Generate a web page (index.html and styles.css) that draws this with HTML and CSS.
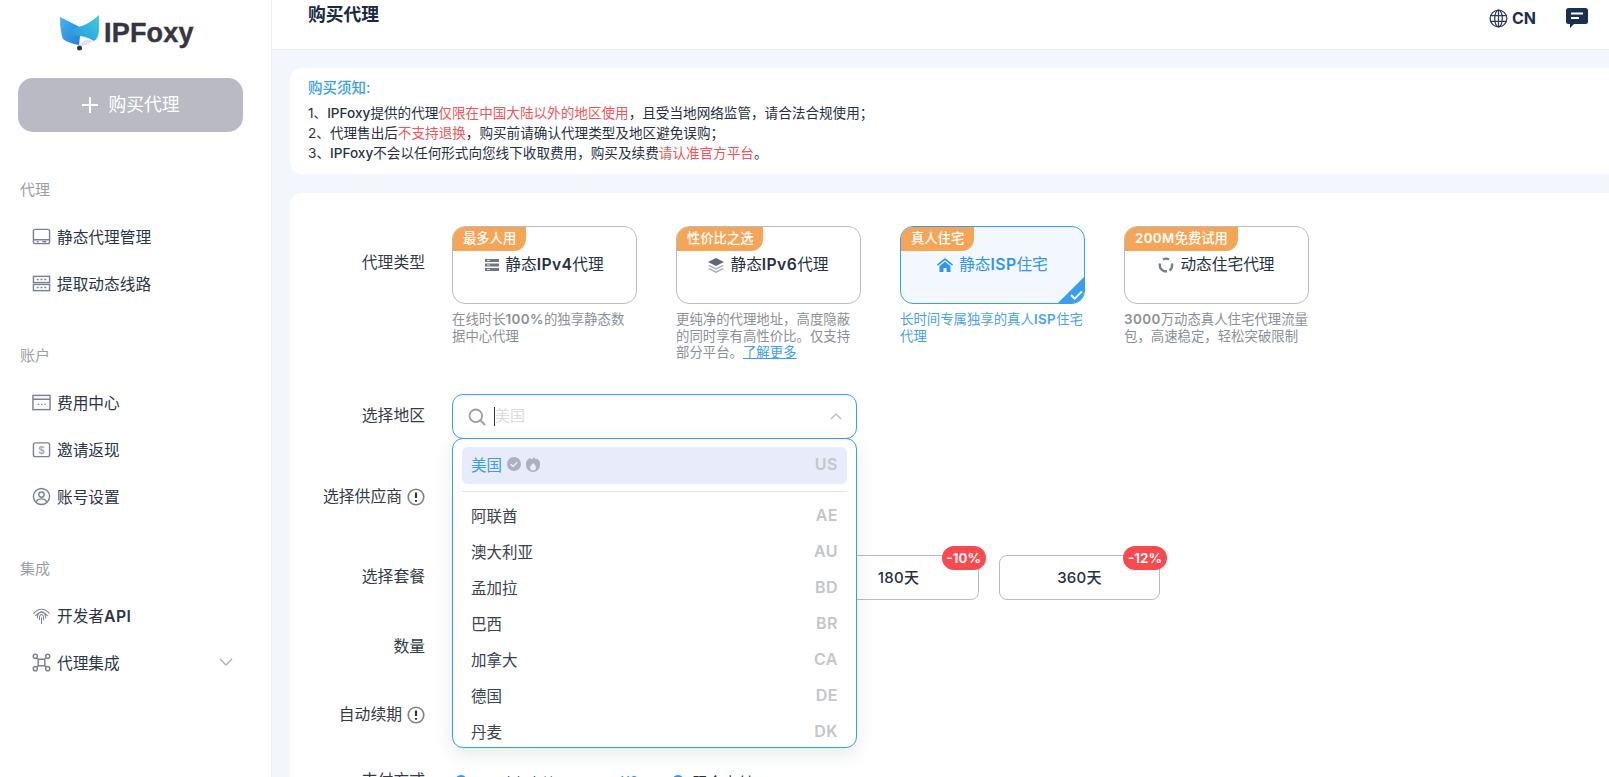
FILE: index.html
```html
<!DOCTYPE html>
<html lang="zh-CN">
<head>
<meta charset="utf-8">
<title>购买代理 - IPFoxy</title>
<link rel="stylesheet" href="styles.css">
</head>
<body>
<div class="app">
  <aside class="sidebar">
    <div class="logo">
      <svg class="logo-mark" viewBox="0 0 40 36" width="40" height="36">
        <defs>
          <linearGradient id="fa" x1="0" y1="0" x2="1" y2="1"><stop offset="0" stop-color="#47b4ee"/><stop offset="1" stop-color="#1f7fd6"/></linearGradient>
          <linearGradient id="fb" x1="0" y1="1" x2="1" y2="0"><stop offset="0" stop-color="#2a8fe0"/><stop offset="1" stop-color="#3fd0dc"/></linearGradient>
        </defs>
        <path d="M0 2 L12 8 Q18 11 21 13 L19 30 Q8 28 3 24 Q0 16 0 2Z" fill="url(#fa)"/>
        <path d="M39 0 L39 16 Q38 24 34 26 Q26 20 8 20 Q12 12 22 11 Q30 8 39 0Z" fill="url(#fb)"/>
        <path d="M20 30 Q25 22 34 26 Q28 30 22 31Z" fill="#dfe4ea"/>
        <circle cx="19.500" cy="33" r="2.500" fill="#33363f"/>
      </svg>
      <span class="logo-text">IPFoxy</span>
    </div>
    <button class="buy-btn"><svg viewBox="0 0 18 18" width="18" height="18"><path d="M9 1v16M1 9h16" stroke="#fff" stroke-width="2" fill="none"/></svg><span class="buy-text">购买代理</span></button>

    <div class="nav-label first">代理</div>
    <a class="nav-item"><svg class="nav-ic" viewBox="0 0 20 20"><rect x="1.500" y="2.500" width="17" height="15" rx="2"/><path d="M1.500 13.500h17M5 15.500h2M11 15.500h4"/></svg><span>静态代理管理</span></a>
    <a class="nav-item"><svg class="nav-ic" viewBox="0 0 20 20"><rect x="1.500" y="2.500" width="17" height="6.500"/><rect x="1.500" y="11" width="17" height="6.500"/><path d="M5 5.700h2M9 5.700h2M13 5.700h2M5 14.200h2M9 14.200h2M13 14.200h2"/></svg><span>提取动态线路</span></a>

    <div class="nav-label">账户</div>
    <a class="nav-item"><svg class="nav-ic" viewBox="0 0 20 20"><rect x="1" y="2.500" width="18" height="15"/><path d="M1 6.500h18M6 12h1.500M9.500 12H11M13 12h1.500"/></svg><span>费用中心</span></a>
    <a class="nav-item"><svg class="nav-ic" viewBox="0 0 20 20"><rect x="1.500" y="3" width="17" height="14.500" rx="2"/><text x="10" y="14.500" class="dollar">$</text></svg><span>邀请返现</span></a>
    <a class="nav-item"><svg class="nav-ic" viewBox="0 0 20 20"><circle cx="10" cy="10" r="8.500"/><circle cx="10" cy="8" r="2.800"/><path d="M4.500 15.500 Q6 12.500 10 12.500 T15.500 15.500"/></svg><span>账号设置</span></a>

    <div class="nav-label last">集成</div>
    <a class="nav-item"><svg class="nav-ic thin" viewBox="0 0 20 20"><path d="M1.500 8 Q10 -1 18.500 8M3.500 10.500 Q10 2.500 16.500 10.500M5.500 13 Q6 6 10 6 T14.500 13M7.800 15 Q7.500 9 10 9 T12.200 15M10 12v7"/></svg><span>开发者<b class="latin">API</b></span></a>
    <a class="nav-item has-caret"><svg class="nav-ic" viewBox="0 0 20 20"><circle cx="3.500" cy="3.500" r="2.200"/><circle cx="16.500" cy="3.500" r="2.200"/><circle cx="3.500" cy="16.500" r="2.200"/><circle cx="16.500" cy="16.500" r="2.200"/><path d="M5.200 5.200l2 2M14.800 5.200l-2 2M5.200 14.800l2-2M14.800 14.800l-2-2"/><rect x="6.500" y="6.500" width="7" height="7" rx="1"/></svg><span>代理集成</span><svg class="caret" viewBox="0 0 14 8" width="14" height="8"><path d="M1 1l6 6 6-6" fill="none" stroke="#a9aeb6" stroke-width="1.400"/></svg></a>
  </aside>

  <main class="main">
    <header class="topbar">
      <h1 class="page-title">购买代理</h1>
      <div class="top-actions">
        <span class="lang">
          <svg viewBox="0 0 20 20" width="19" height="19" fill="none" stroke="#2b3b55" stroke-width="1.300"><circle cx="10" cy="10" r="8.800"/><ellipse cx="10" cy="10" rx="4" ry="8.800"/><path d="M1.500 7h17M1.500 13h17M10 1v18"/></svg>
          <b>CN</b>
        </span>
        <svg class="chat" viewBox="0 0 22 20" width="22" height="20"><path d="M2.500 0h17A2.500 2.500 0 0 1 22 2.500v11a2.500 2.500 0 0 1-2.500 2.500H8l-4 4v-4H2.500A2.500 2.500 0 0 1 0 13.500v-11A2.500 2.500 0 0 1 2.500 0Z" fill="#1b2f4f"/><path d="M5 5.500h12M5 10h8" stroke="#fff" stroke-width="2"/></svg>
      </div>
    </header>

    <section class="notice">
      <h2 class="notice-title">购买须知:</h2>
      <p>1、<b class="med">IPFoxy</b>提供的代理<span class="red">仅限在中国大陆以外的地区使用</span>，且受当地网络监管，请合法合规使用；</p>
      <p>2、代理售出后<span class="red">不支持退换</span>，购买前请确认代理类型及地区避免误购；</p>
      <p>3、<b class="med">IPFoxy</b>不会以任何形式向您线下收取费用，购买及续费<span class="red">请认准官方平台</span>。</p>
    </section>

    <section class="form-card">
      <div class="row row-type">
        <div class="row-label">代理类型</div>
        <div class="type-grid">
          <div class="type-col">
            <div class="type-card"><span class="badge">最多人用</span><div class="type-name">
              <svg class="t-ic" viewBox="0 0 14 14" width="14" height="14"><path d="M0 1h14v3H0zM0 5.500h14v3H0zM0 10h14v3H0z" fill="#6d7585"/><path d="M2 2.500h3M2 7h3M2 11.500h3" stroke="#fff" stroke-width=".8"/></svg>
              <span>静态<b class="latin">IPv4</b>代理</span></div></div>
            <p class="type-desc">在线时长<b class="latin">100%</b>的独享静态数据中心代理</p>
          </div>
          <div class="type-col">
            <div class="type-card"><span class="badge">性价比之选</span><div class="type-name">
              <svg class="t-ic" viewBox="0 0 16 15" width="16" height="15"><path d="M8 0l8 4-8 4-8-4z" fill="#5f6878"/><path d="M1.500 7L8 10.200 14.500 7l1.500.8L8 11.800 0 7.800zM1.500 10L8 13.200 14.500 10l1.500.8L8 15 0 10.800z" fill="#a7adb8"/></svg>
              <span>静态<b class="latin">IPv6</b>代理</span></div></div>
            <p class="type-desc">更纯净的代理地址，高度隐蔽的同时享有高性价比。仅支持部分平台。<a class="learn">了解更多</a></p>
          </div>
          <div class="type-col selected">
            <div class="type-card"><span class="badge">真人住宅</span><div class="type-name">
              <svg class="t-ic" viewBox="0 0 16 14" width="16" height="14"><path d="M8 0l8 6.500-1 1.200L8 2.200 1 7.700 0 6.500z" fill="#2f96ea"/><path d="M2.500 8L8 3.700 13.500 8v6H9.500v-4h-3v4h-4z" fill="#2f96ea"/></svg>
              <span>静态<b class="latin">ISP</b>住宅</span></div>
              <span class="corner"><svg viewBox="0 0 14 11" width="13" height="10"><path d="M1 5.500l4 4 8-8" fill="none" stroke="#fff" stroke-width="2"/></svg></span>
            </div>
            <p class="type-desc">长时间专属独享的真人<b class="latin">ISP</b>住宅代理</p>
          </div>
          <div class="type-col">
            <div class="type-card"><span class="badge"><b class="latin">200M</b>免费试用</span><div class="type-name">
              <svg class="t-ic" viewBox="0 0 16 16" width="16" height="16" fill="none" stroke="#777f8c" stroke-width="2.400"><path d="M5 2.400A6.400 6.400 0 0 1 11 2.400M13.800 6.500A6.400 6.400 0 0 1 11.500 13.500M9 14.300H6.500A6.400 6.400 0 0 1 2 6.500"/></svg>
              <span>动态住宅代理</span></div></div>
            <p class="type-desc"><b class="latin">3000</b>万动态真人住宅代理流量包，高速稳定，轻松突破限制</p>
          </div>
        </div>
      </div>

      <div class="row row-region">
        <div class="row-label">选择地区</div>
        <div class="select-wrap">
          <div class="select-box">
            <svg viewBox="0 0 18 18" width="18" height="18" fill="none" stroke="#9a9ea6" stroke-width="1.800"><circle cx="7.800" cy="7.800" r="6.300"/><path d="M12.500 12.500l4.500 4.500"/></svg>
            <span class="cursor"></span><span class="placeholder">美国</span>
            <svg class="chev" viewBox="0 0 12 7" width="12" height="7"><path d="M1 6l5-5 5 5" fill="none" stroke="#bcc0c6" stroke-width="1.500"/></svg>
          </div>
          <div class="dropdown">
            <div class="opt active"><span class="opt-name">美国</span>
              <svg viewBox="0 0 14 14" width="14" height="14"><circle cx="7" cy="7" r="7" fill="#adb1bd"/><path d="M3.800 7.200l2.300 2.300 4.200-4.300" fill="none" stroke="#e8ebfa" stroke-width="1.500"/></svg>
              <svg viewBox="0 0 14 15" width="14" height="15"><path d="M4 1l2 1.500L8 0l1.800 2.500L11 1.500A7 7 0 0 1 14 8a7 7 0 0 1-14 0 7 7 0 0 1 4-7z" fill="#adb1bd"/><path d="M7 6c2 1.500 3 3 3 4.500a3 3 0 0 1-6 0C4 9 5.500 8 7 6z" fill="#e8ebfa"/></svg>
              <span class="code">US</span></div>
            <div class="divider"></div>
            <div class="opt"><span class="opt-name">阿联酋</span><span class="code">AE</span></div>
            <div class="opt"><span class="opt-name">澳大利亚</span><span class="code">AU</span></div>
            <div class="opt"><span class="opt-name">孟加拉</span><span class="code">BD</span></div>
            <div class="opt"><span class="opt-name">巴西</span><span class="code">BR</span></div>
            <div class="opt"><span class="opt-name">加拿大</span><span class="code">CA</span></div>
            <div class="opt"><span class="opt-name">德国</span><span class="code">DE</span></div>
            <div class="opt"><span class="opt-name">丹麦</span><span class="code">DK</span></div>
          </div>
        </div>
      </div>

      <div class="row row-provider">
        <div class="row-label">选择供应商<svg class="info" viewBox="0 0 18 18" width="18" height="18"><circle cx="9" cy="9" r="7.800" fill="none" stroke="#808080" stroke-width="1.600"/><path d="M9 4.500v5.500M9 12v1.800" stroke="#333" stroke-width="2.200"/></svg></div>
      </div>

      <div class="row row-plan">
        <div class="row-label">选择套餐</div>
        <div class="plans">
          <div class="plan">30天</div>
          <div class="plan">90天<span class="off">-5%</span></div>
          <div class="plan">180天<span class="off">-10%</span></div>
          <div class="plan">360天<span class="off">-12%</span></div>
        </div>
      </div>

      <div class="row row-qty"><div class="row-label">数量</div></div>

      <div class="row row-renew">
        <div class="row-label">自动续期<svg class="info" viewBox="0 0 18 18" width="18" height="18"><circle cx="9" cy="9" r="7.800" fill="none" stroke="#808080" stroke-width="1.600"/><path d="M9 4.500v5.500M9 12v1.800" stroke="#333" stroke-width="2.200"/></svg></div>
      </div>

      <div class="row row-pay">
        <div class="row-label">支付方式</div>
        <div class="pay">
          <span class="radio"></span><span class="pay-name">可用余额支付</span><span class="pay-amt">¥0</span>
          <span class="radio"></span><span class="pay-cash">现金支付</span>
        </div>
      </div>
    </section>
  </main>
</div>
</body>
</html>
```
FILE: styles.css
```css
* { box-sizing: border-box; }
html, body { margin: 0; height: 100%; overflow: hidden; }
body {
  font-family: Inter, "Noto Sans CJK SC", sans-serif;
  color: #1f2d3d;
  background: #f3f7fd;
}
.app { display: flex; height: 777px; overflow: hidden; }

/* sidebar */
.sidebar {
  width: 272px;
  flex: none;
  background: #fff;
  border-right: 1px solid #e9edf2;
  padding: 0 18px;
}
.logo { height: 66px; display: flex; align-items: center; gap: 4px; padding: 0 0 0 42px; }
.logo-mark { flex: none; }
.logo-text {
  font: 700 27px "Liberation Sans", sans-serif;
  color: #35363f;
  letter-spacing: 0.2px;
  -webkit-text-stroke: 0.4px #35363f;
}
.buy-btn {
  margin-top: 12px;
  width: 225px;
  height: 54px;
  border: 0;
  border-radius: 15px;
  background: #b9bac3;
  color: #fff;
  font: 400 17.800px Inter, "Noto Sans CJK SC", sans-serif;
  display: flex;
  align-items: center;
  justify-content: center;
  gap: 9px;
  padding: 0;
}
.buy-text { padding-bottom: 4px; }
.nav-label {
  margin: 38px 0 13px 2px;
  font-size: 15px;
  line-height: 20px;
  color: #9b9fa6;
}
.nav-label.first { margin-top: 48px; }
.nav-label.last { margin: 39px 0 12px 2px; }
.nav-item {
  height: 47.300px;
  display: flex;
  align-items: center;
  gap: 6px;
  padding-left: 14px;
  font-size: 15.700px;
  color: #2a3547;
}
.nav-ic {
  width: 19px;
  height: 19px;
  flex: none;
  fill: none;
  stroke: #7a8292;
  stroke-width: 1.500;
}
.nav-ic.thin { stroke-width: 1.100; }
.dollar {
  font: 700 11.500px "Liberation Sans", sans-serif;
  text-anchor: middle;
  fill: #a3a9b3;
  stroke: none;
}
.latin { font-weight: 600; letter-spacing: .4px; }
.has-caret { padding-right: 20px; }
.caret { margin-left: auto; }

/* main */
.main { flex: 1; min-width: 0; }
.topbar {
  height: 50px;
  background: #fff;
  border-bottom: 1px solid #e8edf3;
  display: flex;
  justify-content: space-between;
  padding: 2px 21px 0 36px;
}
.page-title { margin: 0; font-size: 17.800px; font-weight: 600; line-height: 26px; color: #1b2a41; }
.top-actions { display: flex; align-items: flex-start; gap: 30px; padding-top: 6px; }
.lang { display: flex; align-items: center; gap: 4px; font-size: 16px; color: #1b2f4f; }
.lang b { font-weight: 700; }

.notice {
  margin: 18px -20px 0 18px;
  height: 106px;
  background: #fff;
  border-radius: 12px;
  padding: 9px 18px;
  font-size: 13.600px;
  line-height: 20px;
  color: #27313f;
}
.notice-title { margin: 0 0 4px; font-size: 14.500px; font-weight: 500; line-height: 22px; color: #3a9eec; }
.notice p { margin: 0; }
.med { font-weight: 500; }
.red { color: #f0555a; }

.form-card {
  margin: 19px -20px 0 18px;
  height: 640px;
  background: #fff;
  border-radius: 12px 0 0 0;
  padding-top: 33px;
}
.row { display: flex; align-items: center; }
.row-label {
  width: 135px;
  flex: none;
  margin-right: 27px;
  padding-bottom: 4px;
  display: flex;
  align-items: center;
  justify-content: flex-end;
  gap: 5px;
  font-size: 15.800px;
  color: #333b47;
}
.row-type { align-items: flex-start; height: 168px; }
.row-type .row-label { height: 74px; }
.info { margin-top: 3px; }
.type-grid { display: grid; grid-template-columns: repeat(4, 185px); column-gap: 39px; }
.type-card {
  position: relative;
  height: 78px;
  border: 1px solid #b9bcc0;
  border-radius: 13px;
  background: #fff;
  overflow: hidden;
}
.badge {
  display: inline-block;
  height: 24px;
  padding: 0 10px;
  background: #f5a555;
  color: #fff;
  font-size: 13.300px;
  line-height: 23px;
  border-radius: 0 0 12px 0;
  vertical-align: top;
  font-weight: 500;
}
.type-name {
  display: flex;
  align-items: center;
  justify-content: center;
  gap: 6px;
  margin-top: 2px;
  font-size: 15.700px;
  line-height: 24px;
  color: #253042;
}
.type-desc { margin: 7px 0 0; font-size: 13.400px; line-height: 16.500px; color: #8b9098; }
.learn { color: #3a9eec; text-decoration: underline; }
.selected .type-card { border-color: #3a9eec; background: #f2f8fe; }
.selected .type-name { color: #2f96ea; }
.selected .type-desc { color: #4aa3e8; }
.corner {
  position: absolute;
  right: -1px;
  bottom: -1px;
  width: 28px;
  height: 28px;
  background: #3a9eec;
  clip-path: polygon(100% 0, 100% 100%, 0 100%);
}
.corner svg { position: absolute; right: 2px; bottom: 4px; }

.row-region { height: 45px; }
.select-wrap { position: relative; width: 405px; height: 45px; z-index: 5; }
.select-box {
  height: 45px;
  border: 1px solid #3a9eec;
  border-radius: 11px;
  background: #fff;
  display: flex;
  align-items: center;
  padding: 0 14px 0 15px;
}
.cursor { width: 1px; height: 19px; background: #333; margin-left: 8px; }
.placeholder { font-size: 15px; color: #dcdcdc; padding-bottom: 4px; }
.chev { margin-left: auto; }
.dropdown {
  position: absolute;
  left: 0;
  right: 0;
  top: 44px;
  height: 310px;
  border: 1px solid #3a9eec;
  border-radius: 11px;
  background: #fff;
  box-shadow: 0 6px 18px rgba(60, 70, 90, .12);
  padding: 8px 9px;
  overflow: hidden;
}
.opt {
  height: 36px;
  display: flex;
  align-items: center;
  gap: 5px;
  padding: 0 9px 3px;
  font-size: 15.500px;
  color: #3a4350;
}
.opt.active { height: 37px; background: #e8ebfa; border-radius: 6px; }
.opt.active .opt-name { color: #3a9eec; }
.code { margin-left: auto; font-weight: 600; font-size: 16px; letter-spacing: .5px; color: #c4c6ca; }
.divider { height: 1px; background: #e3e4e6; margin: 7px 0 6px; }

.row-provider { margin-top: 36px; height: 44px; }
.row-plan { margin-top: 36px; height: 45px; }
.plans { display: grid; grid-template-columns: repeat(4, 161px); column-gap: 20px; margin-left: 4px; }
.plan {
  position: relative;
  height: 45px;
  border: 1px solid #b9bcc0;
  border-radius: 8px;
  display: flex;
  align-items: center;
  justify-content: center;
  padding-bottom: 2px;
  font-size: 15px;
  font-weight: 500;
  letter-spacing: .3px;
  color: #253042;
  background: #fff;
}
.off {
  position: absolute;
  right: -8px;
  top: -10px;
  height: 24px;
  padding: 0 5px;
  border-radius: 12px;
  background: #f94a50;
  color: #fff;
  font-size: 13.500px;
  line-height: 24px;
  font-weight: 600;
  letter-spacing: 0;
}
.row-qty { margin-top: 25px; height: 44px; }
.row-renew { margin-top: 24px; height: 44px; }
.row-pay { margin-top: 22px; height: 44px; }
.pay { display: flex; align-items: center; gap: 9px; margin-left: 3px; font-size: 15px; }
.radio { width: 12px; height: 12px; border-radius: 50%; border: 4px solid #2f96ea; }
.pay-name { color: #253042; font-size: 13px; }
.pay-cash { color: #253042; }
.pay-amt { color: #2f96ea; margin: 0 24px 0 58px; }
```
